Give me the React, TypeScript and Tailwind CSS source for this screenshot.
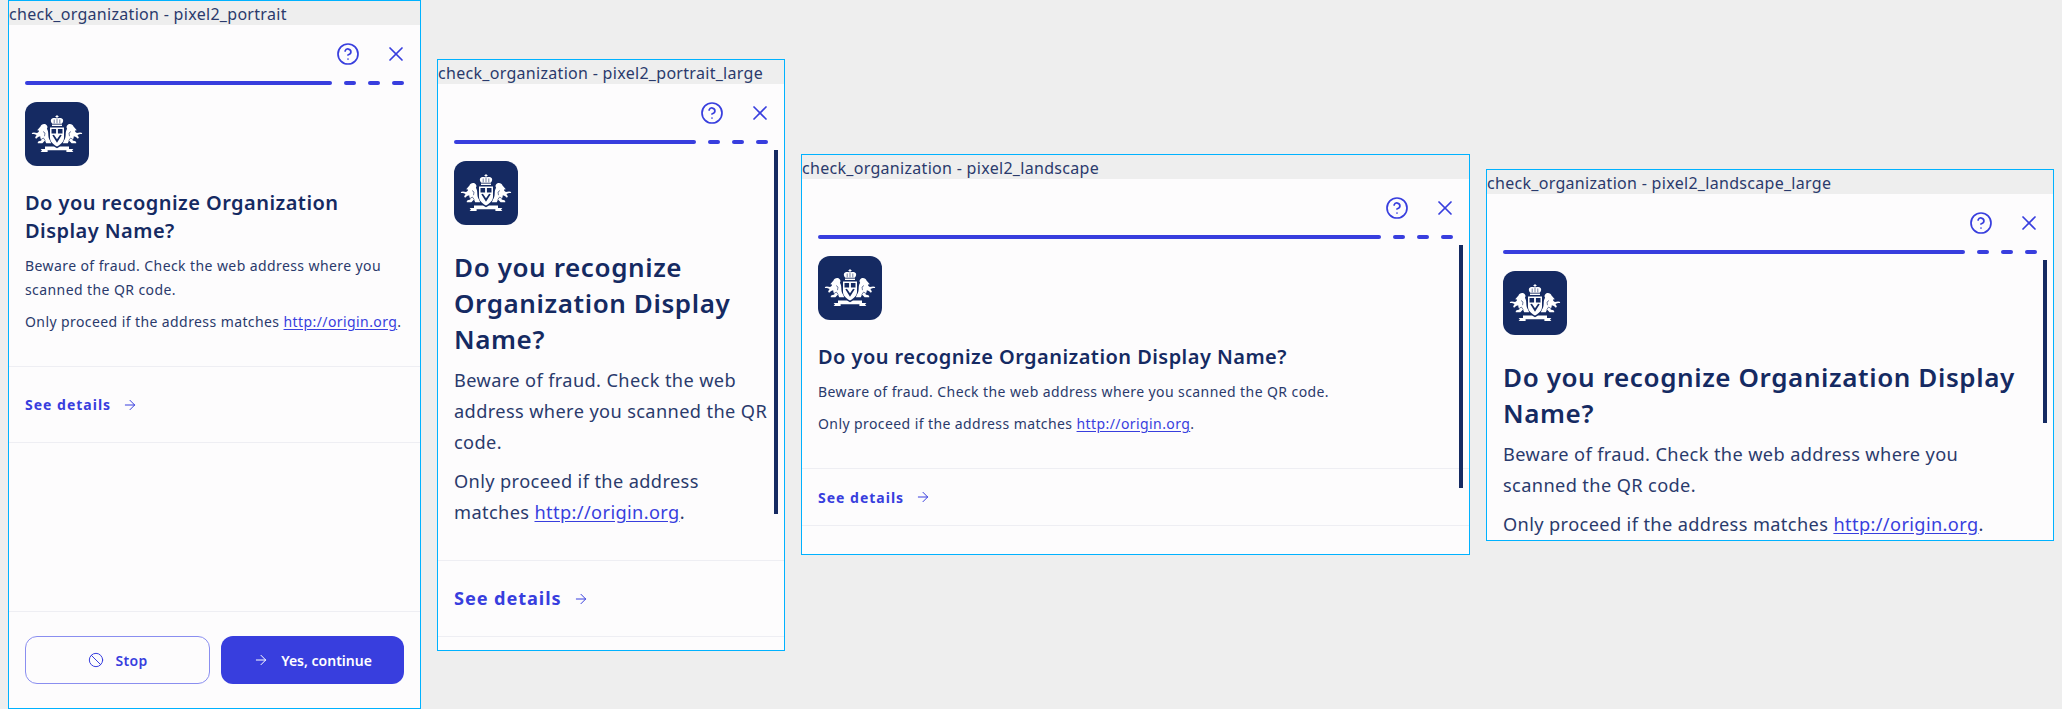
import { ArrowRight, Ban, CircleHelp, X } from 'lucide-react';

const font = 'font-["Noto_Sans",sans-serif]';

const lionPath =
  'M15.5 24.5c.4-2 3.4-3.2 5.4-2 1.7 1 2 3 1 4.3 1 1.4 1.4 3.4 1.4 5.4 0 2.6.5 4.6 1.7 6.2l1.2 2.8h-5l-1.2-2.8-2.6 2.8h-4.6c-.3-1.2.5-1.9 1.7-2.2l1.9-.5c-.7-1.6-1.2-2.8-1.2-4.2l-2.2.7-1.4 1.6c-.9-.2-1.4-.7-1.4-1.4l1.4-2.2-2.6-1-1.9-.1-.3-.9 2.1-.6 3.2.6 1.8-1.3-.5-1.8-1.4.5z';

// Coat of arms on the organization tile
const OrganizationLogo = () => (
  <div className="flex h-16 w-16 shrink-0 items-center justify-center rounded-xl bg-[#152a62]">
    <svg width="64" height="64" viewBox="0 0 64 64" fill="#ffffff">
      {/* crown */}
      <path d="M31.5 13h1v1.1h1v.9h-1v1.4c2-.8 4.4-.4 5.3.8.8 1.2.2 3.2-1.1 4.6H27.3c-1.3-1.4-1.9-3.4-1.1-4.6.9-1.2 3.3-1.6 5.3-.8V15h-1v-.9h1z" />
      <path d="M29.2 17.5v3.8M32 17v4.3M34.8 17.5v3.8" stroke="#152a62" strokeWidth="0.6" />
      <rect x="27" y="22.6" width="10" height="1.4" />
      {/* lions */}
      <path d={lionPath} />
      <path d="M18 29.5l2 1.5-.5 3.2M15.5 38l2.8-2 2 2.6" stroke="#152a62" strokeWidth="0.6" fill="none" />
      <g transform="matrix(-1 0 0 1 64 0)">
        <path d={lionPath} />
        <path d="M18 29.5l2 1.5-.5 3.2M15.5 38l2.8-2 2 2.6" stroke="#152a62" strokeWidth="0.6" fill="none" />
      </g>
      {/* shield */}
      <path
        fillRule="evenodd"
        d="M25 25.6h14v10.4c0 3.6-3.1 6.4-7 8.6-3.9-2.2-7-5-7-8.6zm1.5 1.5v4.4h4.6v-4.4zm6.4 0v4.4h4.6v-4.4zm-5.6 6.2 4.7 7.4 4.7-7.4-1.6-.6-3.1 4.6-3.1-4.6z"
      />
      {/* ribbon */}
      <path d="M20 44.6h9l3 1.6 3-1.6h9v2.4h4.4l-1.4 1.4 1.4 1.5h-7v-1.7H22.600v1.700h-7l1.400-1.500-1.400-1.400H20z" />
    </svg>
  </div>
);

// Step progress: one long bar and three short dashes
const Progress = () => (
  <div className="flex items-center gap-3">
    <div className="h-1 flex-1 rounded-full bg-[#383ede]" />
    <div className="h-1 w-3 rounded-full bg-[#383ede]" />
    <div className="h-1 w-3 rounded-full bg-[#383ede]" />
    <div className="h-1 w-3 rounded-full bg-[#383ede]" />
  </div>
);

type ScreenProps = {
  label: string;
  frame: string;
  large?: boolean;
  detailsRow: string;
  titleClass: string;
  scrollbar?: string;
  footer?: boolean;
  spacer?: boolean;
};

const Screen = ({ label, frame, large, detailsRow, titleClass, scrollbar, footer, spacer }: ScreenProps) => {
  const bodyClass = large
    ? 'text-[18.2px] leading-[31px] tracking-[0.38px]'
    : 'text-[14px] leading-6 tracking-[0.41px]';

  return (
    <div className={`flex shrink-0 flex-col overflow-hidden border border-[#00b2ff] bg-[#fdfcfd] ${frame}`}>
      <div className="h-6 shrink-0 overflow-hidden whitespace-nowrap bg-[#eeeeee] text-[16px] leading-[26px] tracking-[0.3px] text-[#2a3a6c]">
        {label}
      </div>

      <div className="flex h-14 shrink-0 items-center justify-end gap-6 pr-[12px] pt-[1px] text-[#383ede]">
        <CircleHelp size={24} strokeWidth={1.7} />
        <X size={24} strokeWidth={1.7} />
      </div>

      <div className="relative flex min-h-0 flex-1 flex-col">
        <div className="shrink-0 px-4">
          <Progress />
        </div>

        {scrollbar && <div className={`absolute right-[6px] top-[10px] w-1 bg-[#152a62] ${scrollbar}`} />}

        <div className="mt-[17px] flex shrink-0 flex-col px-4">
          <OrganizationLogo />
          <h1 className={`font-semibold text-[#152a62] ${titleClass}`}>
            Do you recognize Organization Display Name?
          </h1>
          <p className={`${large ? 'mt-2' : 'mt-[9px]'} text-[#2a3a6c] ${bodyClass}`}>
            Beware of fraud. Check the web address where you scanned the QR code.
          </p>
          <p className={`mt-2 text-[#2a3a6c] ${bodyClass}`}>
            Only proceed if the address matches{' '}
            <span className="text-[#383ede] underline underline-offset-2">http://origin.org</span>.
          </p>
        </div>

        <div className="mt-8 shrink-0 border-y border-[#eeeef3]">
          <div className={`flex items-center gap-[11px] px-4 font-bold text-[#383ede] ${detailsRow}`}>
            <span>See details</span>
            <ArrowRight size={16} strokeWidth={1.5} />
          </div>
        </div>

        {spacer && <div className="flex-1" />}

        {footer && (
          <div className="flex shrink-0 gap-[11px] border-t border-[#eeeef3] px-4 py-6 text-[14px] font-semibold">
            <button className="flex h-12 flex-1 items-center justify-center gap-3 rounded-xl border border-[#8a8ef0] text-[#383ede]">
              <Ban size={16} strokeWidth={1.5} />
              <span className="tracking-[0.3px]">Stop</span>
            </button>
            <button className="flex h-12 flex-1 items-center justify-center gap-3 rounded-xl bg-[#383ede] text-white">
              <ArrowRight size={16} strokeWidth={1.5} />
              Yes, continue
            </button>
          </div>
        )}
      </div>
    </div>
  );
};

export default function App() {
  const smallTitle = 'mt-[23px] text-[20px] leading-7 tracking-[0.45px]';
  const largeTitle = 'mt-6 text-[26px] leading-9 tracking-[0.6px]';
  const smallDetails = 'text-[14px] tracking-[1px]';
  const largeDetails = 'text-[18.2px] tracking-[0.9px]';

  return (
    <div className={`flex h-[709px] w-[2062px] items-start gap-4 overflow-hidden bg-[#eeeeee] pl-2 ${font}`}>
      <Screen
        label="check_organization - pixel2_portrait"
        frame="h-[709px] w-[413px]"
        detailsRow={`h-[75px] ${smallDetails}`}
        titleClass={smallTitle}
        spacer
        footer
      />
      <Screen
        label="check_organization - pixel2_portrait_large"
        frame="mt-[59px] h-[592px] w-[348px]"
        large
        detailsRow={`h-[75px] ${largeDetails}`}
        titleClass={largeTitle}
        scrollbar="h-[364px]"
      />
      <Screen
        label="check_organization - pixel2_landscape"
        frame="mt-[154px] h-[401px] w-[669px]"
        detailsRow={`h-[56px] ${smallDetails}`}
        titleClass={smallTitle}
        scrollbar="h-[243px]"
      />
      <Screen
        label="check_organization - pixel2_landscape_large"
        frame="mt-[169px] h-[372px] w-[568px]"
        large
        detailsRow={`h-[75px] ${largeDetails}`}
        titleClass={largeTitle}
        scrollbar="h-[163px]"
      />
    </div>
  );
}
